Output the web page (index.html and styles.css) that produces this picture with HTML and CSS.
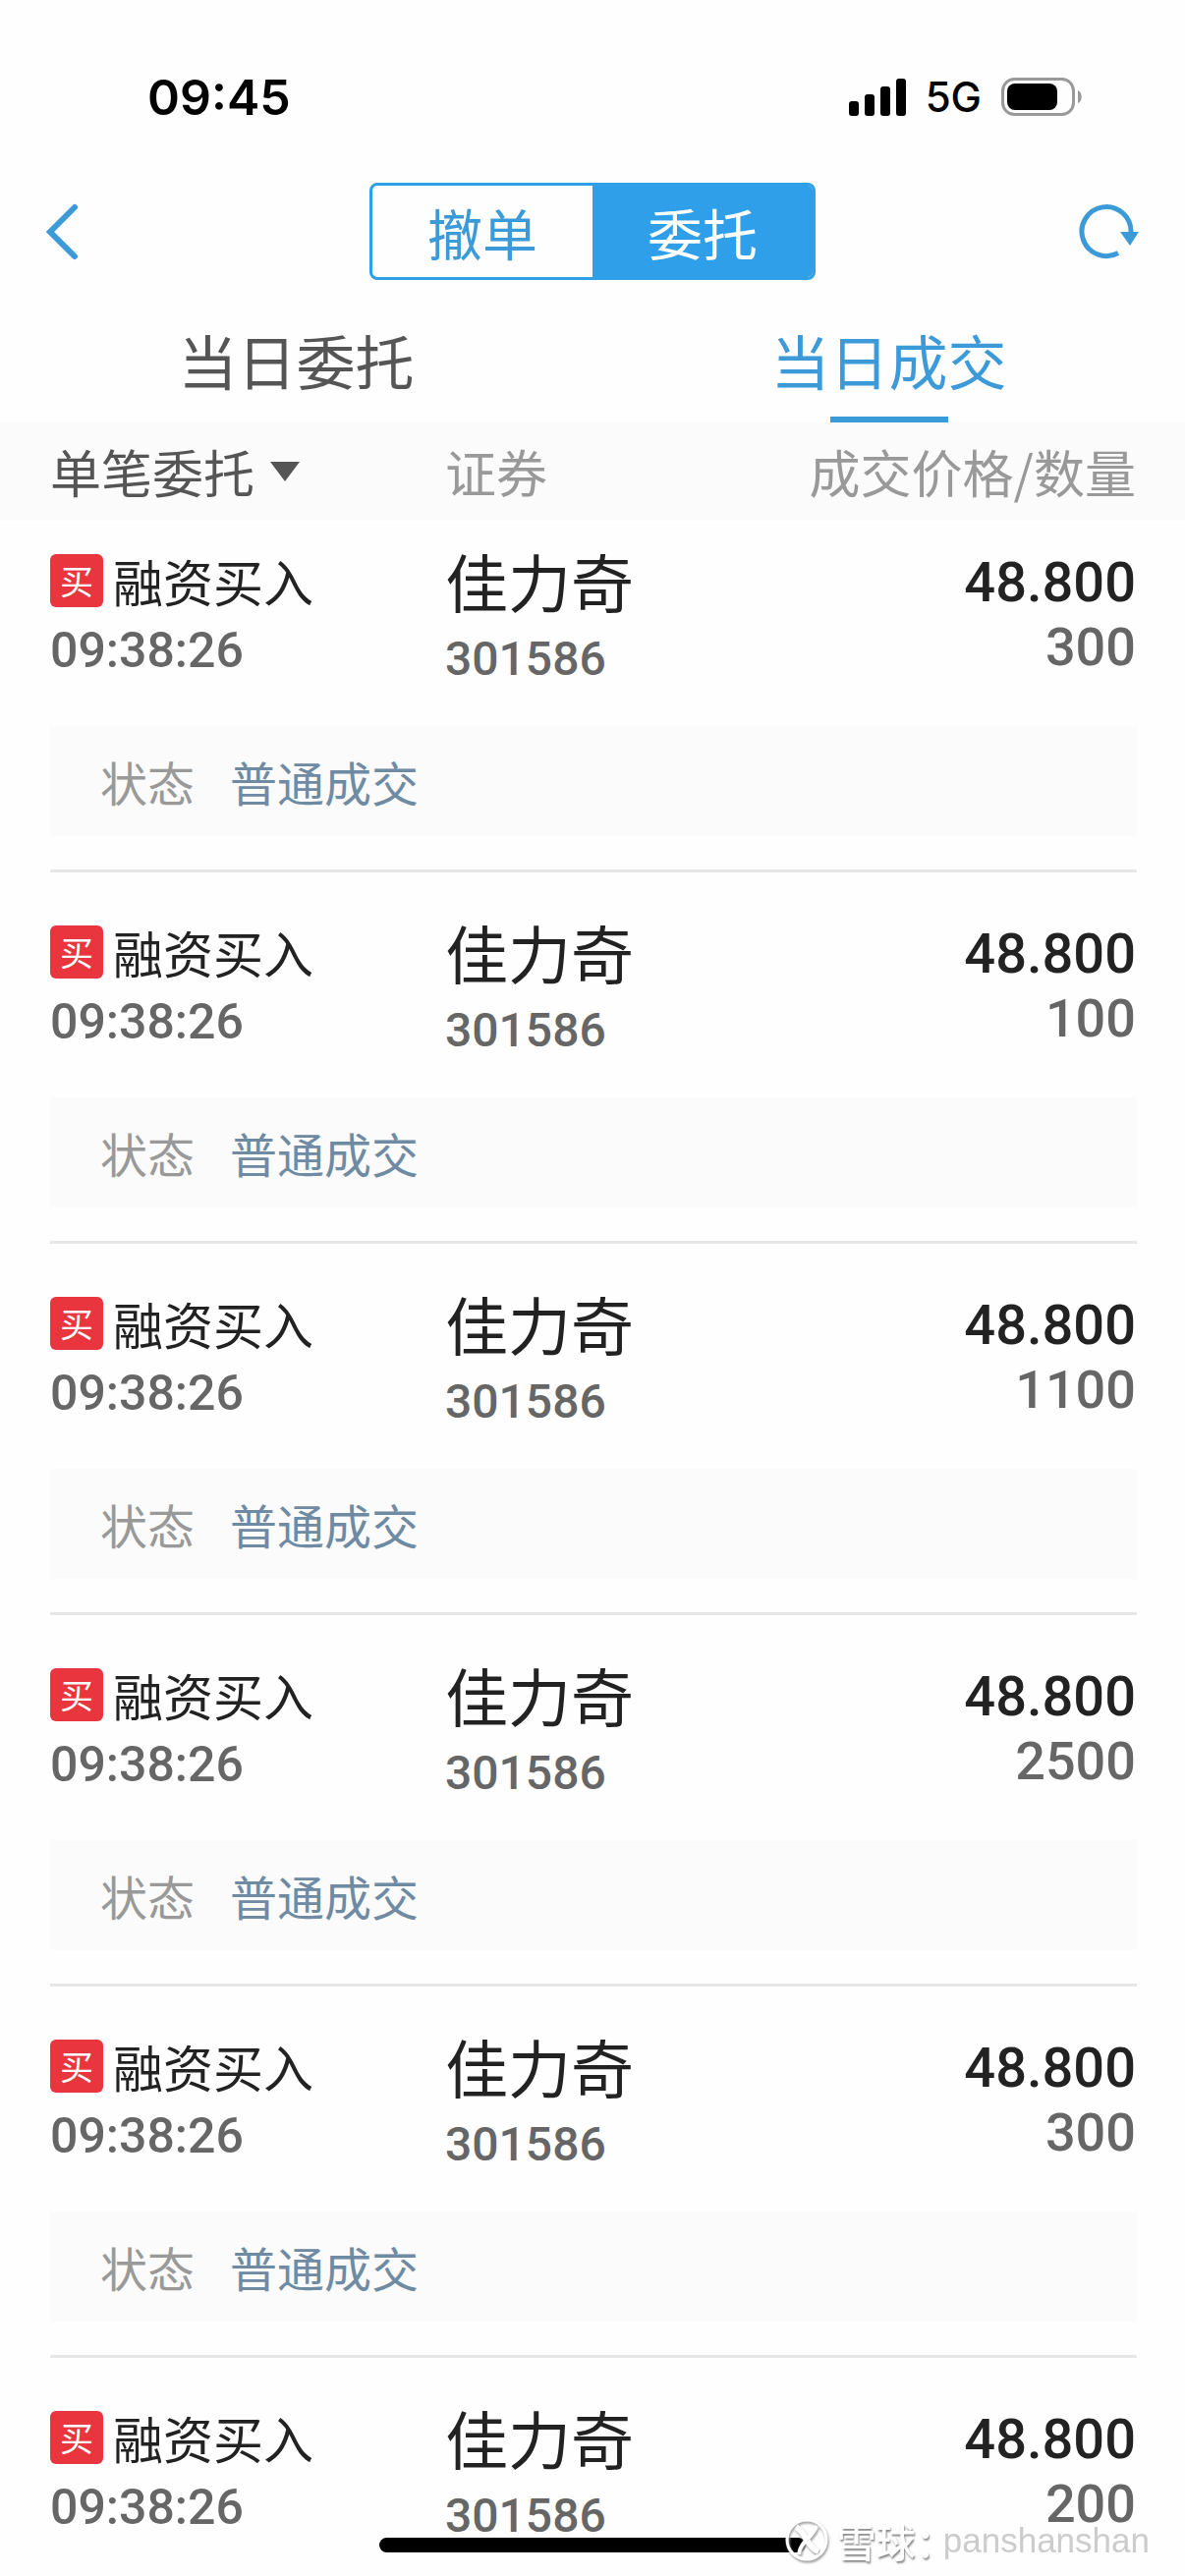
FILE: index.html
```html
<!DOCTYPE html>
<html lang="zh-CN">

<head>
    <meta charset="UTF-8" />
    <meta name="viewport" content="width=device-width, initial-scale=1.0" />
    <title>当日成交</title>
    <link rel="stylesheet" href="styles.css">
</head>

<body>
    <!-- Status Bar -->
    <div class="status-bar">
        <span class="clock">09:45</span>
        <div class="status-icons">
            <svg width="58" height="38" viewBox="0 0 58 38">
                <rect x="0" y="23" width="10" height="15" rx="3" />
                <rect x="16" y="16" width="10" height="22" rx="3" />
                <rect x="32" y="8" width="10" height="30" rx="3" />
                <rect x="48" y="0" width="10" height="38" rx="3" />
            </svg>
            <span class="network">5G</span>
            <svg width="82" height="40" viewBox="0 0 82 40">
                <rect x="1.5" y="1.5" width="72" height="36" rx="12" fill="none" stroke="#999" stroke-width="3" />
                <rect x="6" y="6" width="51" height="27" rx="8" />
                <path d="M78 13c5 2 5 11 0 13z" fill="#999" />
            </svg>
        </div>
    </div>

    <!-- Navigation -->
    <header class="nav">
        <button class="icon-btn" aria-label="返回">
            <svg width="34" height="58" viewBox="0 0 34 58">
                <path d="M30 4L5 29l25 25" fill="none" stroke="#3d9ad8" stroke-width="6" stroke-linecap="round" />
            </svg>
        </button>
        <div class="segment">
            <button class="segment-btn">撤单</button>
            <button class="segment-btn active">委托</button>
        </div>
        <button class="icon-btn" aria-label="刷新">
            <svg width="62" height="58" viewBox="0 0 62 58">
                <path d="M40 50.500A25 25 0 1 1 53 29" fill="none" stroke="#3d9ad8" stroke-width="5" />
                <path d="M42 29h19l-9 14z" fill="#3d9ad8" />
            </svg>
        </button>
    </header>

    <nav class="tabs">
        <a href="#" class="tab">当日委托</a>
        <a href="#" class="tab active">当日成交</a>
    </nav>

    <!-- Deal List -->
    <main class="list">
        <table class="table">
            <thead>
                <tr>
                    <th>
                        <div class="filter">
                            <select aria-label="委托类型">
                                <option>单笔委托</option>
                            </select>
                            <svg width="32" height="22" viewBox="0 0 32 22">
                                <path d="M1 1h30L16 21z" fill="#555" />
                            </svg>
                        </div>
                    </th>
                    <th>证券</th>
                    <th>成交价格/数量</th>
                </tr>
            </thead>
            <tbody>
                <tr class="deal">
                    <td><div class="type"><span class="badge">买</span>融资买入</div><div class="time">09:38:26</div></td>
                    <td><div class="name">佳力奇</div><div class="code">301586</div></td>
                    <td><div class="price">48.800</div><div class="amount">300</div></td>
                </tr>
                <tr class="detail">
                    <td colspan="3"><div class="state"><span>状态</span><span class="state-value">普通成交</span></div></td>
                </tr>
            </tbody>
            <tbody>
                <tr class="deal">
                    <td><div class="type"><span class="badge">买</span>融资买入</div><div class="time">09:38:26</div></td>
                    <td><div class="name">佳力奇</div><div class="code">301586</div></td>
                    <td><div class="price">48.800</div><div class="amount">100</div></td>
                </tr>
                <tr class="detail">
                    <td colspan="3"><div class="state"><span>状态</span><span class="state-value">普通成交</span></div></td>
                </tr>
            </tbody>
            <tbody>
                <tr class="deal">
                    <td><div class="type"><span class="badge">买</span>融资买入</div><div class="time">09:38:26</div></td>
                    <td><div class="name">佳力奇</div><div class="code">301586</div></td>
                    <td><div class="price">48.800</div><div class="amount">1100</div></td>
                </tr>
                <tr class="detail">
                    <td colspan="3"><div class="state"><span>状态</span><span class="state-value">普通成交</span></div></td>
                </tr>
            </tbody>
            <tbody>
                <tr class="deal">
                    <td><div class="type"><span class="badge">买</span>融资买入</div><div class="time">09:38:26</div></td>
                    <td><div class="name">佳力奇</div><div class="code">301586</div></td>
                    <td><div class="price">48.800</div><div class="amount">2500</div></td>
                </tr>
                <tr class="detail">
                    <td colspan="3"><div class="state"><span>状态</span><span class="state-value">普通成交</span></div></td>
                </tr>
            </tbody>
            <tbody>
                <tr class="deal">
                    <td><div class="type"><span class="badge">买</span>融资买入</div><div class="time">09:38:26</div></td>
                    <td><div class="name">佳力奇</div><div class="code">301586</div></td>
                    <td><div class="price">48.800</div><div class="amount">300</div></td>
                </tr>
                <tr class="detail">
                    <td colspan="3"><div class="state"><span>状态</span><span class="state-value">普通成交</span></div></td>
                </tr>
            </tbody>
            <tbody>
                <tr class="deal">
                    <td><div class="type"><span class="badge">买</span>融资买入</div><div class="time">09:38:26</div></td>
                    <td><div class="name">佳力奇</div><div class="code">301586</div></td>
                    <td><div class="price">48.800</div><div class="amount">200</div></td>
                </tr>
            </tbody>
        </table>
    </main>

    <div class="home-indicator"></div>

    <!-- Watermark -->
    <div class="watermark">
        <svg width="48" height="48" viewBox="0 0 48 48" fill="none" stroke="#fff">
            <circle cx="23" cy="23" r="20" stroke-width="3" />
            <path d="M12 10c5 3 8 8 11 13s6 10 12 12" stroke-width="6" />
            <path d="M33 9c-2 6-5 9-9 13S16 30 15 38" stroke-width="4" />
        </svg>
        <span class="brand">雪球：</span>
        <span class="user">panshanshan</span>
    </div>
</body>

</html>
```
FILE: styles.css
```css
* {
    box-sizing: border-box;
}

body {
    font-family: "Noto Sans CJK SC", sans-serif;
    background-color: #fefefe;
    color: #222;
    margin: 0;
    height: 100vh;
    display: flex;
    flex-direction: column;
    overflow: hidden;
}

button {
    font-family: inherit;
    background: none;
    border: none;
    padding: 0;
    cursor: pointer;
}

svg {
    display: block;
}

.status-bar {
    display: flex;
    justify-content: space-between;
    align-items: center;
    padding: 40px 105px 0 150px;
    height: 157px;
    flex-shrink: 0;
    font-family: Inter, sans-serif;
    color: #000;
}

.clock {
    font-size: 50px;
    font-weight: 600;
}

.status-icons {
    display: flex;
    align-items: center;
    gap: 20px;
}

.network {
    font-size: 42px;
    font-weight: 500;
}

.nav {
    display: grid;
    grid-template-columns: 1fr auto 1fr;
    align-items: center;
    height: 157px;
    padding: 0 46px;
    flex-shrink: 0;
}

.icon-btn:last-child {
    justify-self: end;
}

.icon-btn:first-child {
    justify-self: start;
}

.segment {
    display: flex;
    border: 3px solid #2f9fea;
    border-radius: 8px;
    overflow: hidden;
}

.segment-btn {
    width: 224px;
    height: 93px;
    font-size: 56px;
    line-height: 93px;
    color: #3d9ad8;
}

.segment-btn.active {
    background-color: #2f9fea;
    color: white;
}

.tabs {
    display: flex;
    flex-shrink: 0;
}

.tab {
    flex: 1;
    display: flex;
    flex-direction: column;
    align-items: center;
    justify-content: space-between;
    height: 116px;
    font-size: 60px;
    line-height: 104px;
    color: #555;
    text-decoration: none;
}

.tab.active {
    color: #3d9ad8;
}

.tab.active::after {
    content: "";
    width: 120px;
    height: 6px;
    background-color: #3d9ad8;
}

.list {
    flex: 1;
    min-height: 0;
    overflow-y: auto;
    scrollbar-width: none;
}

.table {
    width: 100%;
    table-layout: fixed;
    border-spacing: 0;
}

th,
td {
    padding: 0;
    text-align: left;
    vertical-align: top;
}

th {
    height: 99px;
    background-color: #fbfbfb;
    color: #999;
    font-size: 52px;
    font-weight: 400;
    line-height: 99px;
    white-space: nowrap;
}

th:first-child,
th:last-child {
    width: 453px;
}

th:first-child,
.deal td:first-child {
    padding-left: 51px;
}

th:last-child,
.deal td:last-child {
    padding-right: 50px;
    text-align: right;
}

.filter {
    display: flex;
    align-items: center;
    gap: 14px;
}

.filter select {
    appearance: none;
    border: none;
    background: none;
    padding: 0;
    font: inherit;
    color: #555;
}

.deal td {
    padding-top: 50px;
}

thead + tbody .deal td {
    padding-top: 31px;
}

.type {
    display: flex;
    align-items: center;
    gap: 10px;
    font-size: 51px;
    line-height: 62px;
}

.badge {
    width: 54px;
    height: 54px;
    border-radius: 6px;
    background-color: #e8353e;
    color: white;
    font-size: 34px;
    line-height: 54px;
    text-align: center;
}

.time,
.code,
.price,
.amount {
    font-family: Roboto, sans-serif;
    font-weight: 500;
}

.time,
.code,
.amount {
    color: #666;
}

.time {
    font-size: 50px;
    line-height: 80px;
}

.name {
    font-size: 64px;
    line-height: 60px;
}

.code {
    font-size: 48px;
    line-height: 102px;
}

.price {
    font-size: 56px;
    line-height: 66px;
}

.amount {
    font-size: 54px;
    line-height: 66px;
}

.detail td {
    padding: 17px 49px 0 51px;
}

.detail td::after {
    content: "";
    display: block;
    margin-top: 34px;
    height: 3px;
    background-color: #e6e6e6;
}

.state {
    display: flex;
    gap: 36px;
    padding-left: 51px;
    background-color: #fbfbfb;
    color: #999;
    font-size: 48px;
    line-height: 112px;
}

.state-value {
    color: #6f8aa3;
}

.home-indicator {
    position: fixed;
    bottom: 24px;
    left: 32%;
    width: 36%;
    height: 15px;
    border-radius: 8px;
    background-color: #000;
}

.watermark {
    position: fixed;
    right: 36px;
    bottom: 12px;
    display: flex;
    align-items: center;
    gap: 6px;
    line-height: 48px;
}

.watermark svg {
    filter: drop-shadow(1px 2px 1px #999);
}

.brand {
    width: 102px;
    font-size: 40px;
    font-weight: 500;
    color: white;
    white-space: nowrap;
    text-shadow: 1px 2px 2px #888;
}

.user {
    font-family: "Liberation Sans", sans-serif;
    font-size: 35px;
    color: #ccc;
}
```
